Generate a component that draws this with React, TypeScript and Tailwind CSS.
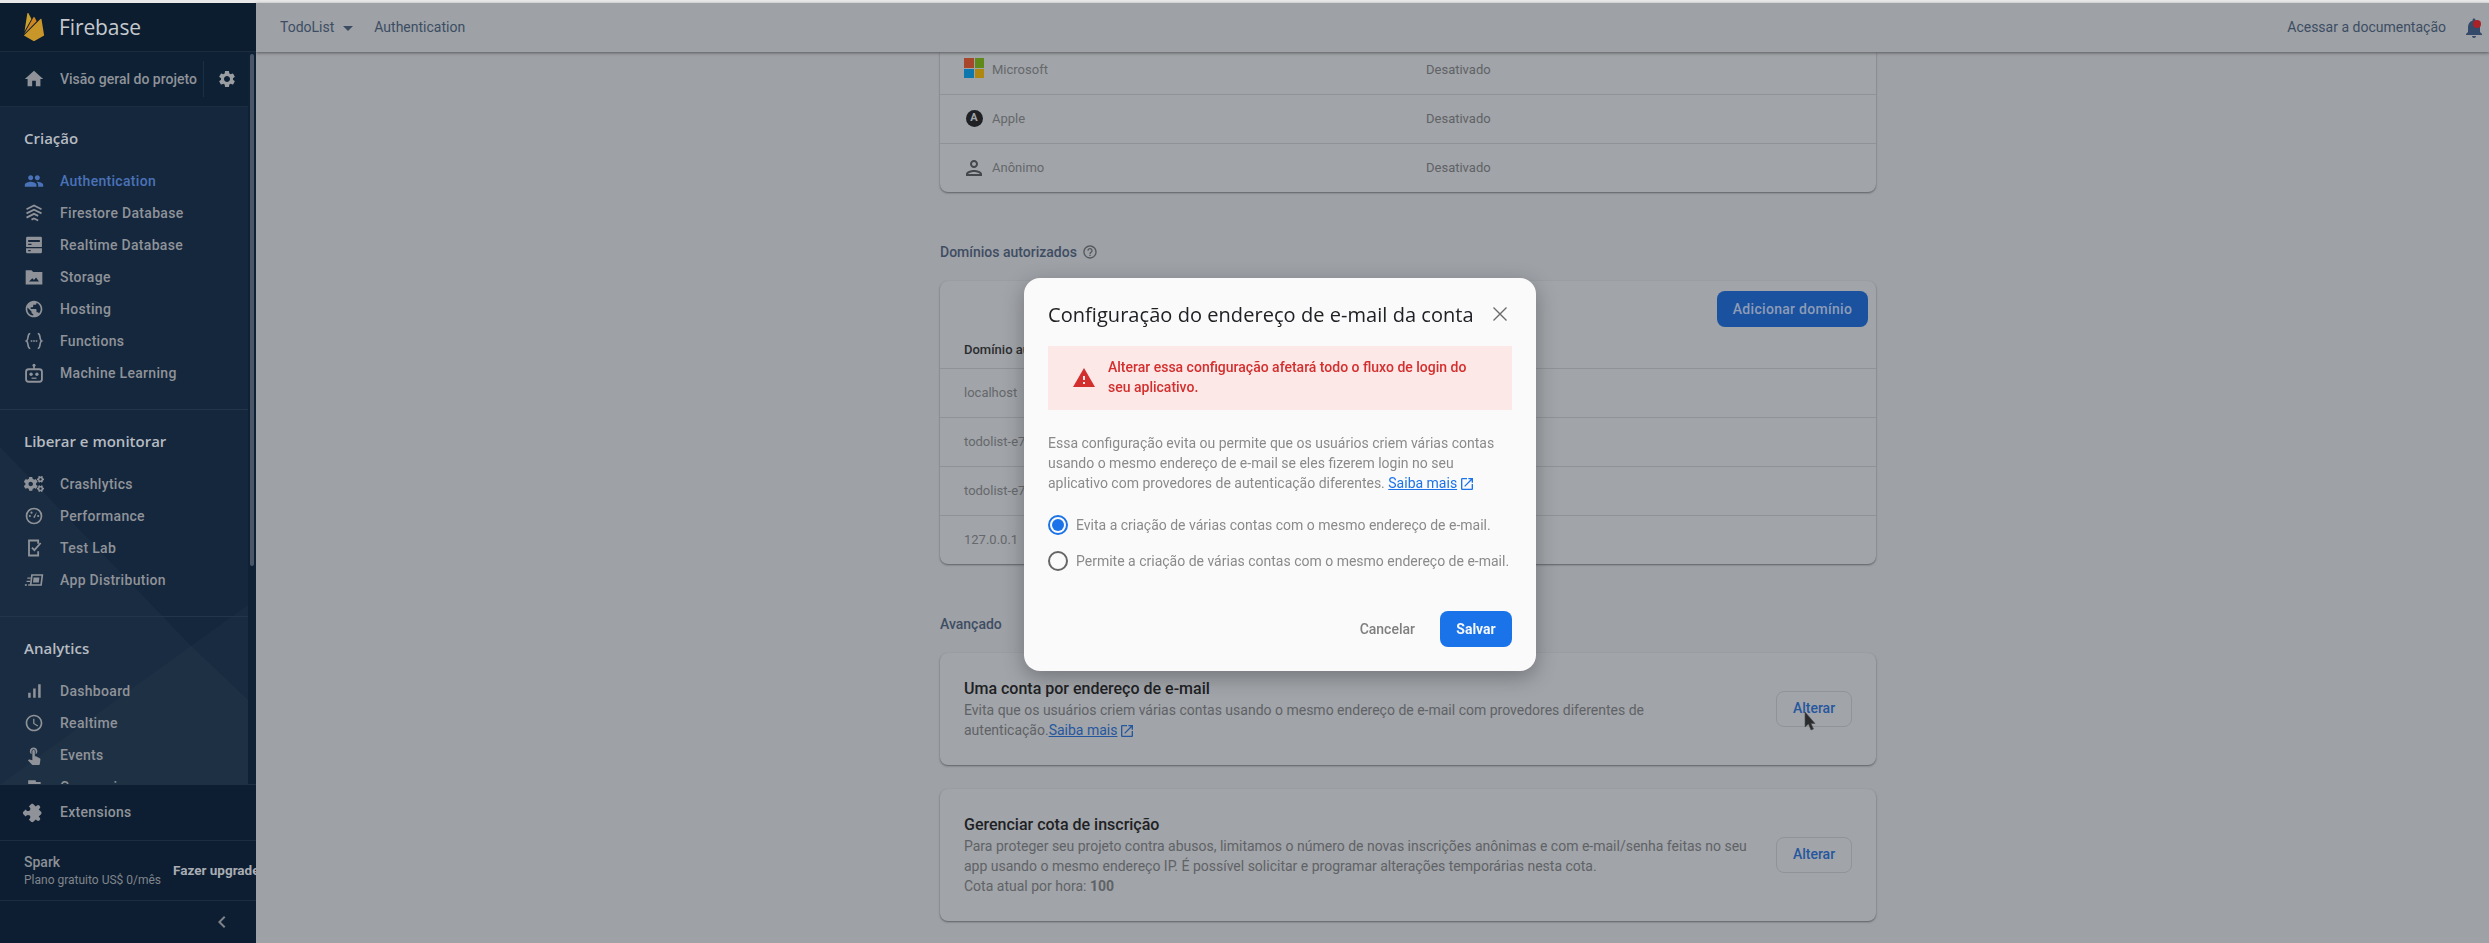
import React from "react";
import {
  MdHome, MdSettings, MdPeople, MdPublic, MdSignalCellularAlt,
  MdOutlineAccessTime, MdTouchApp, MdFlag, MdExtension, MdNotifications, MdWarning, MdOpenInNew,
  MdOutlineHelpOutline, MdOutlinePerson, MdArrowDropDown, MdChevronLeft,
} from "react-icons/md";
import { FaCogs } from "react-icons/fa";

type IC = React.ComponentType<{ className?: string }>;

const Svg = ({ className, children }: { className?: string; children: React.ReactNode }) => (
  <svg viewBox="0 0 24 24" fill="currentColor" className={className}>{children}</svg>
);
const FirestoreIcon: IC = ({ className }) => (
  <Svg className={className}>
    <g fill="none" stroke="currentColor" strokeWidth="2.2">
      <path d="M3 7.500 12 3l9 4.500" />
      <path d="M3 12.500 12 8l9 4.500" />
      <path d="M3 17.500 12 13l5 2.500" />
      <path d="M9 20l3-1.500 5 2.500" />
    </g>
  </Svg>
);
const RealtimeDbIcon: IC = ({ className }) => (
  <Svg className={className}>
    <path fillRule="evenodd" d="M4 2h16a1.500 1.500 0 0 1 1.500 1.500v11H2.500v-11A1.500 1.500 0 0 1 4 2zM5 6v2.500h14V6zM5 10.500v1.500h4v-1.500z" />
    <path fillRule="evenodd" d="M2.500 16h19v4.500A1.500 1.500 0 0 1 20 22H4a1.500 1.500 0 0 1-1.500-1.500zM5 18v1.500h3V18z" />
  </Svg>
);
const FolderImage: IC = ({ className }) => (
  <Svg className={className}>
    <path fillRule="evenodd" d="M2 4h7l2 2h11v15H2zM6 17.500h12l-3.500-5-2.500 3-2-2z" />
  </Svg>
);
const FunctionsIcon: IC = ({ className }) => (
  <Svg className={className}>
    <g fill="none" stroke="currentColor" strokeWidth="2">
      <path d="M7.500 3C3.500 3 6 10.500 3 12c3 1.500.5 9 4.500 9" />
      <path d="M16.500 3c4 0 1.500 7.500 4.500 9-3 1.500-.5 9-4.500 9" />
      <path d="M8 12h8" strokeDasharray="2 1" />
    </g>
  </Svg>
);
const RobotIcon: IC = ({ className }) => (
  <Svg className={className}>
    <circle cx="12" cy="2.600" r="1.800" />
    <path d="M11 3h2v5h-2z" />
    <rect x="2.500" y="7.500" width="19" height="15" rx="3" fill="none" stroke="currentColor" strokeWidth="2.200" />
    <circle cx="8.500" cy="13.500" r="2" />
    <circle cx="15.500" cy="13.500" r="2" />
    <path d="M9 17.500h6v1.500H9z" />
  </Svg>
);
const PerfIcon: IC = ({ className }) => (
  <Svg className={className}>
    <circle cx="12" cy="12" r="9" fill="none" stroke="currentColor" strokeWidth="2" />
    <path d="M11 13.500 15.500 7l-2.500 7.500z" />
    <circle cx="7" cy="12" r="1.300" />
    <circle cx="9" cy="8" r="1.300" />
    <circle cx="17" cy="12" r="1.300" />
  </Svg>
);
const TestLabIcon: IC = ({ className }) => (
  <Svg className={className}>
    <g fill="none" stroke="currentColor" strokeWidth="2.200">
      <path d="M17 7V3H6v18h11v-5" />
      <path d="m9.500 11.500 3 3L20 6" />
    </g>
  </Svg>
);
const AppDistIcon: IC = ({ className }) => (
  <Svg className={className}>
    <g fill="none" stroke="currentColor" strokeWidth="2">
      <path d="M9.500 6H22l-1.500 12H8z" />
    </g>
    <path d="M11.500 9h7l-.7 6h-7z" />
    <path d="M4 9h4v1.500H4zM3 13h4.500v1.500H3zM1 17h2.500v2H1zM5 17h2v2H5z" />
  </Svg>
);
const PuzzleIcon: IC = ({ className }) => <MdExtension className={`${className} rotate-45`} />;

const MsLogo = () => (
  <div className="grid h-[20px] w-[20px] -translate-y-[1px] grid-cols-2 gap-[1px]">
    <span className="bg-[#a8462b]" /><span className="bg-[#5f8a1a]" />
    <span className="bg-[#0e77ad]" /><span className="bg-[#b0880f]" />
  </div>
);

const Item = ({ icon: I, label, active }: { icon: IC; label: string; active?: boolean }) => (
  <div className={`flex h-[32px] shrink-0 items-center pl-[24px] text-[14px] font-medium tracking-[0.3px] ${active ? "text-[#4a72b8]" : "text-[#8f9399]"}`}>
    <I className="h-[20px] w-[20px] shrink-0" />
    <span className="ml-[16px] whitespace-nowrap">{label}</span>
  </div>
);
const Section = ({ title, items, first }: { title: string; items: [IC, string, boolean?][]; first?: boolean }) => (
  <div className={first ? "" : "border-t border-[#243549]"}>
    <div className="flex h-[58px] items-center pl-[24px] pt-[4px] font-['Open_Sans',sans-serif] text-[15px] font-semibold text-[#b6bbc1]">{title}</div>
    <div className="flex flex-col">
      {items.map(([i, l, a]) => <Item key={l} icon={i} label={l} active={a} />)}
    </div>
  </div>
);

const Sidebar = () => (
  <aside className="relative z-20 flex h-full w-[256px] shrink-0 flex-col overflow-hidden bg-[#0c1d30] font-['Roboto',sans-serif]">
    <div className="flex h-[49px] shrink-0 items-center border-b border-[#1d2c3e] pl-[20px]">
      <svg viewBox="0 0 24 24" className="h-[28px] w-[28px]">
        <path fill="#c9a12c" d="M3.890 15.673 6.255.461A.542.542 0 0 1 7.270.289l2.543 4.771z" />
        <path fill="#c9962a" d="m20.684 19.365-2.250-14a.54.54 0 0 0-.919-.295L3.316 19.365l7.856 4.427a1.621 1.621 0 0 0 1.588 0z" />
        <path fill="#d1851f" d="M14.300 7.148l-1.820-3.482a.542.542 0 0 0-.960 0L3.530 17.984z" />
      </svg>
      <span className="ml-[11px] pt-[2px] font-['Open_Sans',sans-serif] text-[21px] tracking-[-0.1px] text-[#c6c9cd]">Firebase</span>
    </div>
    <div className="flex min-h-0 flex-1">
      <div className="flex min-w-0 flex-1 flex-col">
        <div className="flex h-[55px] shrink-0 items-center border-b border-[#1b2c40] bg-[#0e2034] pl-[24px] text-[14px] font-medium text-[#8f9399]">
          <MdHome className="h-[22px] w-[22px] shrink-0 -translate-x-[1px]" />
          <span className="ml-[14px] whitespace-nowrap">Visão geral do projeto</span>
          <span className="ml-[6px] h-[36px] w-px bg-[#1d2f44]" />
          <MdSettings className="ml-[13px] h-[20px] w-[20px] text-[#9a9ea3]" />
        </div>
        <div className="relative min-h-0 flex-1 overflow-hidden bg-[#15273d]">
          <svg className="absolute left-0 top-[-107px] h-[943px] w-[248px]" viewBox="0 0 248 943">
            <polygon points="0,447 190,645 248,700 248,785 0,785" fill="#ffffff" fillOpacity="0.025" />
            <polygon points="248,605 130,690 0,785 248,785" fill="#ffffff" fillOpacity="0.018" />
          </svg>
          <div className="relative">
            <Section first title="Criação" items={[
              [MdPeople, "Authentication", true], [FirestoreIcon, "Firestore Database"], [RealtimeDbIcon, "Realtime Database"],
              [FolderImage, "Storage"], [MdPublic, "Hosting"], [FunctionsIcon, "Functions"], [RobotIcon, "Machine Learning"],
            ]} />
            <div className="h-[20px]" />
            <Section title="Liberar e monitorar" items={[
              [FaCogs, "Crashlytics"], [PerfIcon, "Performance"], [TestLabIcon, "Test Lab"], [AppDistIcon, "App Distribution"],
            ]} />
            <div className="h-[20px]" />
            <Section title="Analytics" items={[
              [MdSignalCellularAlt, "Dashboard"], [MdOutlineAccessTime, "Realtime"], [MdTouchApp, "Events"], [MdFlag, "Conversions"],
            ]} />
          </div>
        </div>
      </div>
      <div className="flex w-[8px] shrink-0 justify-center bg-[#0f2135] pt-[2px]">
        <div className="h-[512px] w-[4px] rounded-full bg-[#4b5768]" />
      </div>
    </div>
    <div className="shrink-0 border-t border-[#1d2f44] bg-[#0d1e32]">
      <div className="flex h-[55px] items-center">
        <Item icon={PuzzleIcon} label="Extensions" />
      </div>
      <div className="flex h-[60px] items-center whitespace-nowrap border-t border-[#1d2c3e] pl-[24px]">
        <div className="w-[149px] shrink-0">
          <div className="text-[14px] font-medium leading-[18px] text-[#8b9096]">Spark</div>
          <div className="text-[12px] leading-[18px] text-[#80858b]">Plano gratuito US$ 0/mês</div>
        </div>
        <span className="text-[13.5px] font-bold text-[#a9adb2]">Fazer upgrade</span>
      </div>
      <div className="flex h-[43px] items-center border-t border-[#1d2c3e] pl-[210px]">
        <MdChevronLeft className="h-[24px] w-[24px] text-[#7d8389]" />
      </div>
    </div>
  </aside>
);

const Row = ({ children, h = "h-[49px]" }: { children: React.ReactNode; h?: string }) => (
  <div className={`flex items-center border-t border-[#8f9296] px-[24px] ${h}`}>{children}</div>
);

const Provider = ({ icon, name }: { icon: React.ReactNode; name: string }) => (
  <>
    <span className="flex w-[20px] justify-center">{icon}</span>
    <span className="ml-[8px] w-[434px] text-[13px] text-[#65686c]">{name}</span>
    <span className="text-[13px] text-[#5f6266]">Desativado</span>
  </>
);

const AdvCard = ({ title, lines, h, btnTop }: { title: string; lines: React.ReactNode; h: string; btnTop: string }) => (
  <div className={`flex justify-between rounded-[8px] bg-[#a1a4a8] px-[24px] shadow-[0_1px_2px_rgba(40,42,46,.55)] ${h}`}>
    <div className="flex flex-col justify-center">
      <div className="text-[16px] font-medium leading-[22px] text-[#202124]">{title}</div>
      <div className="text-[14px] leading-[20px] text-[#5f6266]">{lines}</div>
    </div>
    <button className={`h-[36px] w-[76px] shrink-0 rounded-[8px] border border-[#909398] pb-[2px] text-[14px] font-medium text-[#25579f] ${btnTop}`}>Alterar</button>
  </div>
);

const Main = () => (
  <div className="flex min-w-0 flex-1 flex-col bg-[#9ea1a6] font-['Roboto',sans-serif]">
    <header className="relative z-10 flex h-[49px] shrink-0 items-center bg-[#9ea1a6] pl-[24px] pr-[3px] text-[14px] text-[#3c4d63] shadow-[0_1px_3px_rgba(40,42,46,.6)]">
      <span>TodoList</span>
      <MdArrowDropDown className="ml-[2px] h-[24px] w-[24px]" />
      <span className="ml-[14px]">Authentication</span>
      <span className="ml-auto">Acessar a documentação</span>
      <span className="relative ml-[16px] flex">
        <MdNotifications className="h-[24px] w-[24px] text-[#334a6b]" />
        <span className="absolute right-[5px] top-[4px] h-[8px] w-[8px] rounded-full bg-[#a82228]" />
      </span>
    </header>
    <div className="min-h-0 flex-1 overflow-hidden pl-[684px]">
      <div className="w-[936px]">
        <div className="rounded-b-[8px] bg-[#a1a4a8] shadow-[0_1px_2px_rgba(40,42,46,.55)]">
          <div className="flex h-[42px] items-end px-[24px] pb-[15px]"><Provider icon={<MsLogo />} name="Microsoft" /></div>
          <Row>
            <Provider name="Apple" icon={<span className="flex h-[17px] w-[17px] -translate-y-[1px] items-center justify-center rounded-full bg-[#1f2124] text-[11px] font-bold text-[#a1a4a8]">A</span>} />
          </Row>
          <Row h="h-[49px]">
            <Provider name="Anônimo" icon={<MdOutlinePerson className="h-[24px] w-[24px] shrink-0 text-[#44474b]" />} />
          </Row>
        </div>
        <div className="mt-[50px] flex h-[20px] items-center text-[14px] font-medium text-[#3f4d63]">
          Domínios autorizados
          <MdOutlineHelpOutline className="ml-[5px] h-[16px] w-[16px] text-[#55595f]" />
        </div>
        <div className="mt-[19px] rounded-[8px] bg-[#a1a4a8] shadow-[0_1px_2px_rgba(40,42,46,.55)]">
          <div className="relative flex h-[87px] items-end px-[24px] pb-[9px] text-[13px] font-medium text-[#2a2c2f]">
            Domínio autorizado
            <button className="absolute right-[8px] top-[10px] h-[36px] w-[151px] rounded-[8px] bg-[#1a52a0] text-[14px] font-medium tracking-[0.3px] text-[#8e9cb6]">Adicionar domínio</button>
          </div>
          {["localhost", "todolist-e7a2b.firebaseapp.com", "todolist-e7a2b.web.app", "127.0.0.1"].map((d) => (
            <Row key={d}><span className="text-[13px] text-[#65686c]">{d}</span></Row>
          ))}
        </div>
        <div className="mt-[50px] flex h-[20px] items-center text-[14px] font-medium text-[#3f4d63]">Avançado</div>
        <div className="mt-[19px] flex flex-col gap-[24px]">
          <div className="relative">
            <AdvCard h="h-[112px]" btnTop="mt-[38px]" title="Uma conta por endereço de e-mail" lines={
              <div className="w-[720px]">
                Evita que os usuários criem várias contas usando o mesmo endereço de e-mail com provedores diferentes de autenticação.
                <span className="text-[#25579f] underline">Saiba mais</span>
                <MdOpenInNew className="ml-[2px] inline h-[16px] w-[16px] text-[#25579f]" />
              </div>
            } />
            <svg className="absolute left-[864px] top-[59px] h-[20px] w-[14px]" viewBox="0 0 14 20">
              <path d="M1 0v15l3.500-3 2.500 6 2.500-1-2.500-5.500H11z" fill="#2a2b2d" stroke="#4b4d50" strokeWidth=".6" />
            </svg>
          </div>
          <AdvCard h="h-[132px]" btnTop="mt-[48px]" title="Gerenciar cota de inscrição" lines={
            <div className="w-[800px]">
              Para proteger seu projeto contra abusos, limitamos o número de novas inscrições anônimas e com e-mail/senha feitas no seu app usando o mesmo endereço IP. É possível solicitar e programar alterações temporárias nesta cota.
              <br />Cota atual por hora: <b className="font-bold">100</b>
            </div>
          } />
        </div>
      </div>
    </div>
  </div>
);

const Radio = ({ checked, label }: { checked?: boolean; label: string }) => (
  <div className="flex h-[20px] items-center">
    <span className={`flex h-[20px] w-[20px] shrink-0 items-center justify-center rounded-full border-2 ${checked ? "border-[#1a73e8]" : "border-[#666]"}`}>
      {checked && <span className="h-[12px] w-[12px] rounded-full bg-[#1a73e8]" />}
    </span>
    <span className="ml-[8px] whitespace-nowrap text-[14px] text-[#8a8a8a]">{label}</span>
  </div>
);

const Dialog = () => (
  <div className="fixed left-[1024px] top-[278px] z-30 h-[393px] w-[512px] rounded-[16px] bg-[#fafafa] px-[24px] font-['Roboto',sans-serif] shadow-[0_6px_20px_rgba(30,32,36,.35)]">
    <div className="flex h-[68px] items-center justify-between pt-[6px]">
      <span className="whitespace-nowrap font-['Open_Sans',sans-serif] text-[20px] tracking-[0.05px] text-[#202124]">Configuração do endereço de e-mail da conta</span>
      <svg viewBox="0 0 14 14" className="mr-[5px] h-[14px] w-[14px] shrink-0 -translate-y-[1px] text-[#6a6a6a]" fill="none" stroke="currentColor" strokeWidth="1.300">
        <path d="M.5.5l13 13M13.500.5l-13 13" />
      </svg>
    </div>
    <div className="flex h-[64px] items-center bg-[#fce8e6] px-[24px]">
      <MdWarning className="h-[24px] w-[24px] shrink-0 text-[#d32f2f]" />
      <span className="ml-[12px] -translate-y-[1px] text-[14px] font-medium leading-[20px] text-[#d32f2f]">Alterar essa configuração afetará todo o fluxo de login do seu aplicativo.</span>
    </div>
    <p className="mt-[23px] text-[14px] leading-[20px] text-[#8a8a8a]">
      Essa configuração evita ou permite que os usuários criem várias contas usando o mesmo endereço de e-mail se eles fizerem login no seu aplicativo com provedores de autenticação diferentes.{" "}
      <span className="text-[#1a73e8] underline">Saiba mais</span>
      <MdOpenInNew className="ml-[2px] inline h-[16px] w-[16px] text-[#1a73e8]" />
    </p>
    <div className="mt-[22px] flex flex-col gap-[16px]">
      <Radio checked label="Evita a criação de várias contas com o mesmo endereço de e-mail." />
      <Radio label="Permite a criação de várias contas com o mesmo endereço de e-mail." />
    </div>
    <div className="mt-[40px] flex items-center justify-end">
      <span className="text-[14px] font-medium text-[#7f7f7f]">Cancelar</span>
      <button className="ml-[25px] h-[36px] w-[72px] rounded-[8px] bg-[#1a73e8] text-[14px] font-bold text-[#f4f8fe]">Salvar</button>
    </div>
  </div>
);

export default function App() {
  return (
    <div className="flex h-[943px] w-full flex-col overflow-hidden bg-[#9ea1a6]">
      <div className="h-[3px] shrink-0 bg-[#e8e8e8]" />
      <div className="flex min-h-0 flex-1">
        <Sidebar />
        <Main />
      </div>
      <Dialog />
    </div>
  );
}
